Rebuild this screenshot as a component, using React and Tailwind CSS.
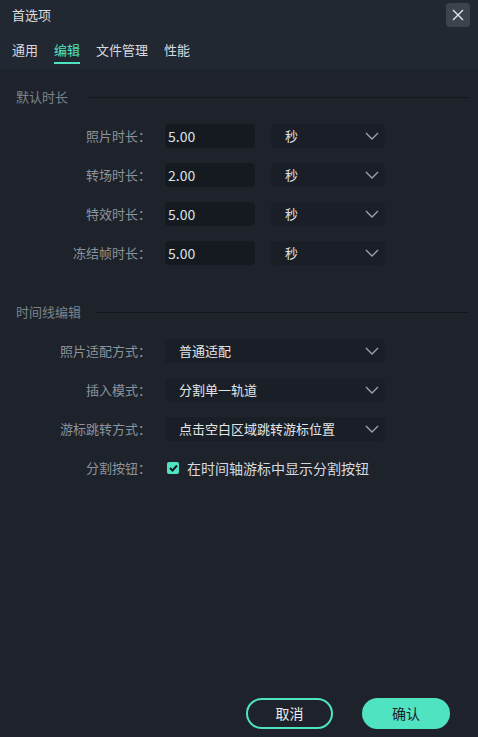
import React from 'react';

const font = { fontFamily: '"Noto Sans CJK SC", "Noto Sans", sans-serif' };

const Chevron = () => (
    <svg width="14" height="8" viewBox="0 0 14 8" fill="none">
        <polyline points="1,1 7,7 13,1" stroke="#9aa2ab" strokeWidth="1.4" />
    </svg>
);

const SectionTitle = ({ title, gap }) => (
    <div className="flex items-center pl-4 pr-[10px] h-[18px]">
        <span className="text-[13px] leading-[18px] text-[#7b838d]">{title}</span>
        <div className={`flex-1 h-px bg-[#13171c] ${gap}`}></div>
    </div>
);

const Label = ({ children }) => (
    <div className="w-[151px] text-right text-[13px] leading-[24px] text-[#8b939c] shrink-0">{children}</div>
);

const DurationRow = ({ label, value }) => (
    <div className="flex items-center h-[24px]">
        <Label>{label}</Label>
        <div className="ml-[14px] w-[90px] h-[24px] rounded bg-[#151a21] pl-[3px] text-[14px] leading-[24px] text-[#dde1e5]">{value}</div>
        <div className="ml-[16px] w-[114px] h-[24px] rounded bg-[#1a1f27] pl-[14px] pr-[6px] flex items-center justify-between">
            <span className="text-[13px] text-[#dde1e5]">秒</span>
            <Chevron />
        </div>
    </div>
);

const SelectRow = ({ label, value }) => (
    <div className="flex items-center h-[24px]">
        <Label>{label}</Label>
        <div className="ml-[14px] w-[220px] h-[24px] rounded bg-[#1a1f27] pl-[14px] pr-[6px] flex items-center justify-between">
            <span className="text-[13px] text-[#e3e6e9]">{value}</span>
            <Chevron />
        </div>
    </div>
);

export default function App() {
    const tabs = ['通用', '编辑', '文件管理', '性能'];
    return (
        <div style={font} className="w-[478px] h-[737px] flex flex-col bg-[#1e232b] overflow-hidden">
            <div className="bg-[#222831]">
                <div className="h-[30px] flex items-center justify-between pl-3 pr-2">
                    <span className="text-[13px] text-[#dadee2]">首选项</span>
                    <div className="w-6 h-6 rounded bg-[#3c434d] flex items-center justify-center">
                        <svg width="12" height="12" viewBox="0 0 12 12">
                            <path d="M1 1 L11 11 M11 1 L1 11" stroke="#e3e6ea" strokeWidth="1.4" />
                        </svg>
                    </div>
                </div>
                <div className="h-[39px] flex gap-4 pl-3 pt-[11px]">
                    {tabs.map((t, i) => (
                        <div key={t} className="flex flex-col">
                            <span className={`text-[13px] leading-[18px] ${i === 1 ? 'text-[#50e3c2]' : 'text-[#d5dae0]'}`}>{t}</span>
                            <div className={`mt-[3px] h-[2px] ${i === 1 ? 'bg-[#50e3c2]' : ''}`}></div>
                        </div>
                    ))}
                </div>
            </div>

            <div className="flex-1 flex flex-col pt-[19px]">
                <SectionTitle title="默认时长" gap="ml-[19px]" />
                <div className="flex flex-col gap-[15px] mt-[18px]">
                    <DurationRow label="照片时长：" value="5.00" />
                    <DurationRow label="转场时长：" value="2.00" />
                    <DurationRow label="特效时长：" value="5.00" />
                    <DurationRow label="冻结帧时长：" value="5.00" />
                </div>

                <div className="mt-[38px]">
                    <SectionTitle title="时间线编辑" gap="ml-[14px]" />
                </div>
                <div className="flex flex-col gap-[15px] mt-[18px]">
                    <SelectRow label="照片适配方式：" value="普通适配" />
                    <SelectRow label="插入模式：" value="分割单一轨道" />
                    <SelectRow label="游标跳转方式：" value="点击空白区域跳转游标位置" />
                    <div className="flex items-center h-[24px]">
                        <Label>分割按钮：</Label>
                        <div className="ml-[16px] w-[12px] h-[12px] rounded-[2px] bg-[#50e3c2] flex items-center justify-center">
                            <svg width="9" height="8" viewBox="0 0 9 8" fill="none">
                                <polyline points="1,4 3.5,6.5 8,1.5" stroke="#151a21" strokeWidth="2" />
                            </svg>
                        </div>
                        <span className="ml-[8px] text-[14px] text-[#d5dae0]">在时间轴游标中显示分割按钮</span>
                    </div>
                </div>

                <div className="mt-auto flex justify-end gap-[29px] pr-[28px] pb-[8px]">
                    <button className="w-[87px] h-[31px] rounded-full border-2 border-[#50e3c2] text-[14px] text-[#e8ebee]">取消</button>
                    <button className="w-[88px] h-[31px] rounded-full bg-[#50e3c2] text-[14px] text-[#1b2028]">确认</button>
                </div>
            </div>
        </div>
    );
}
